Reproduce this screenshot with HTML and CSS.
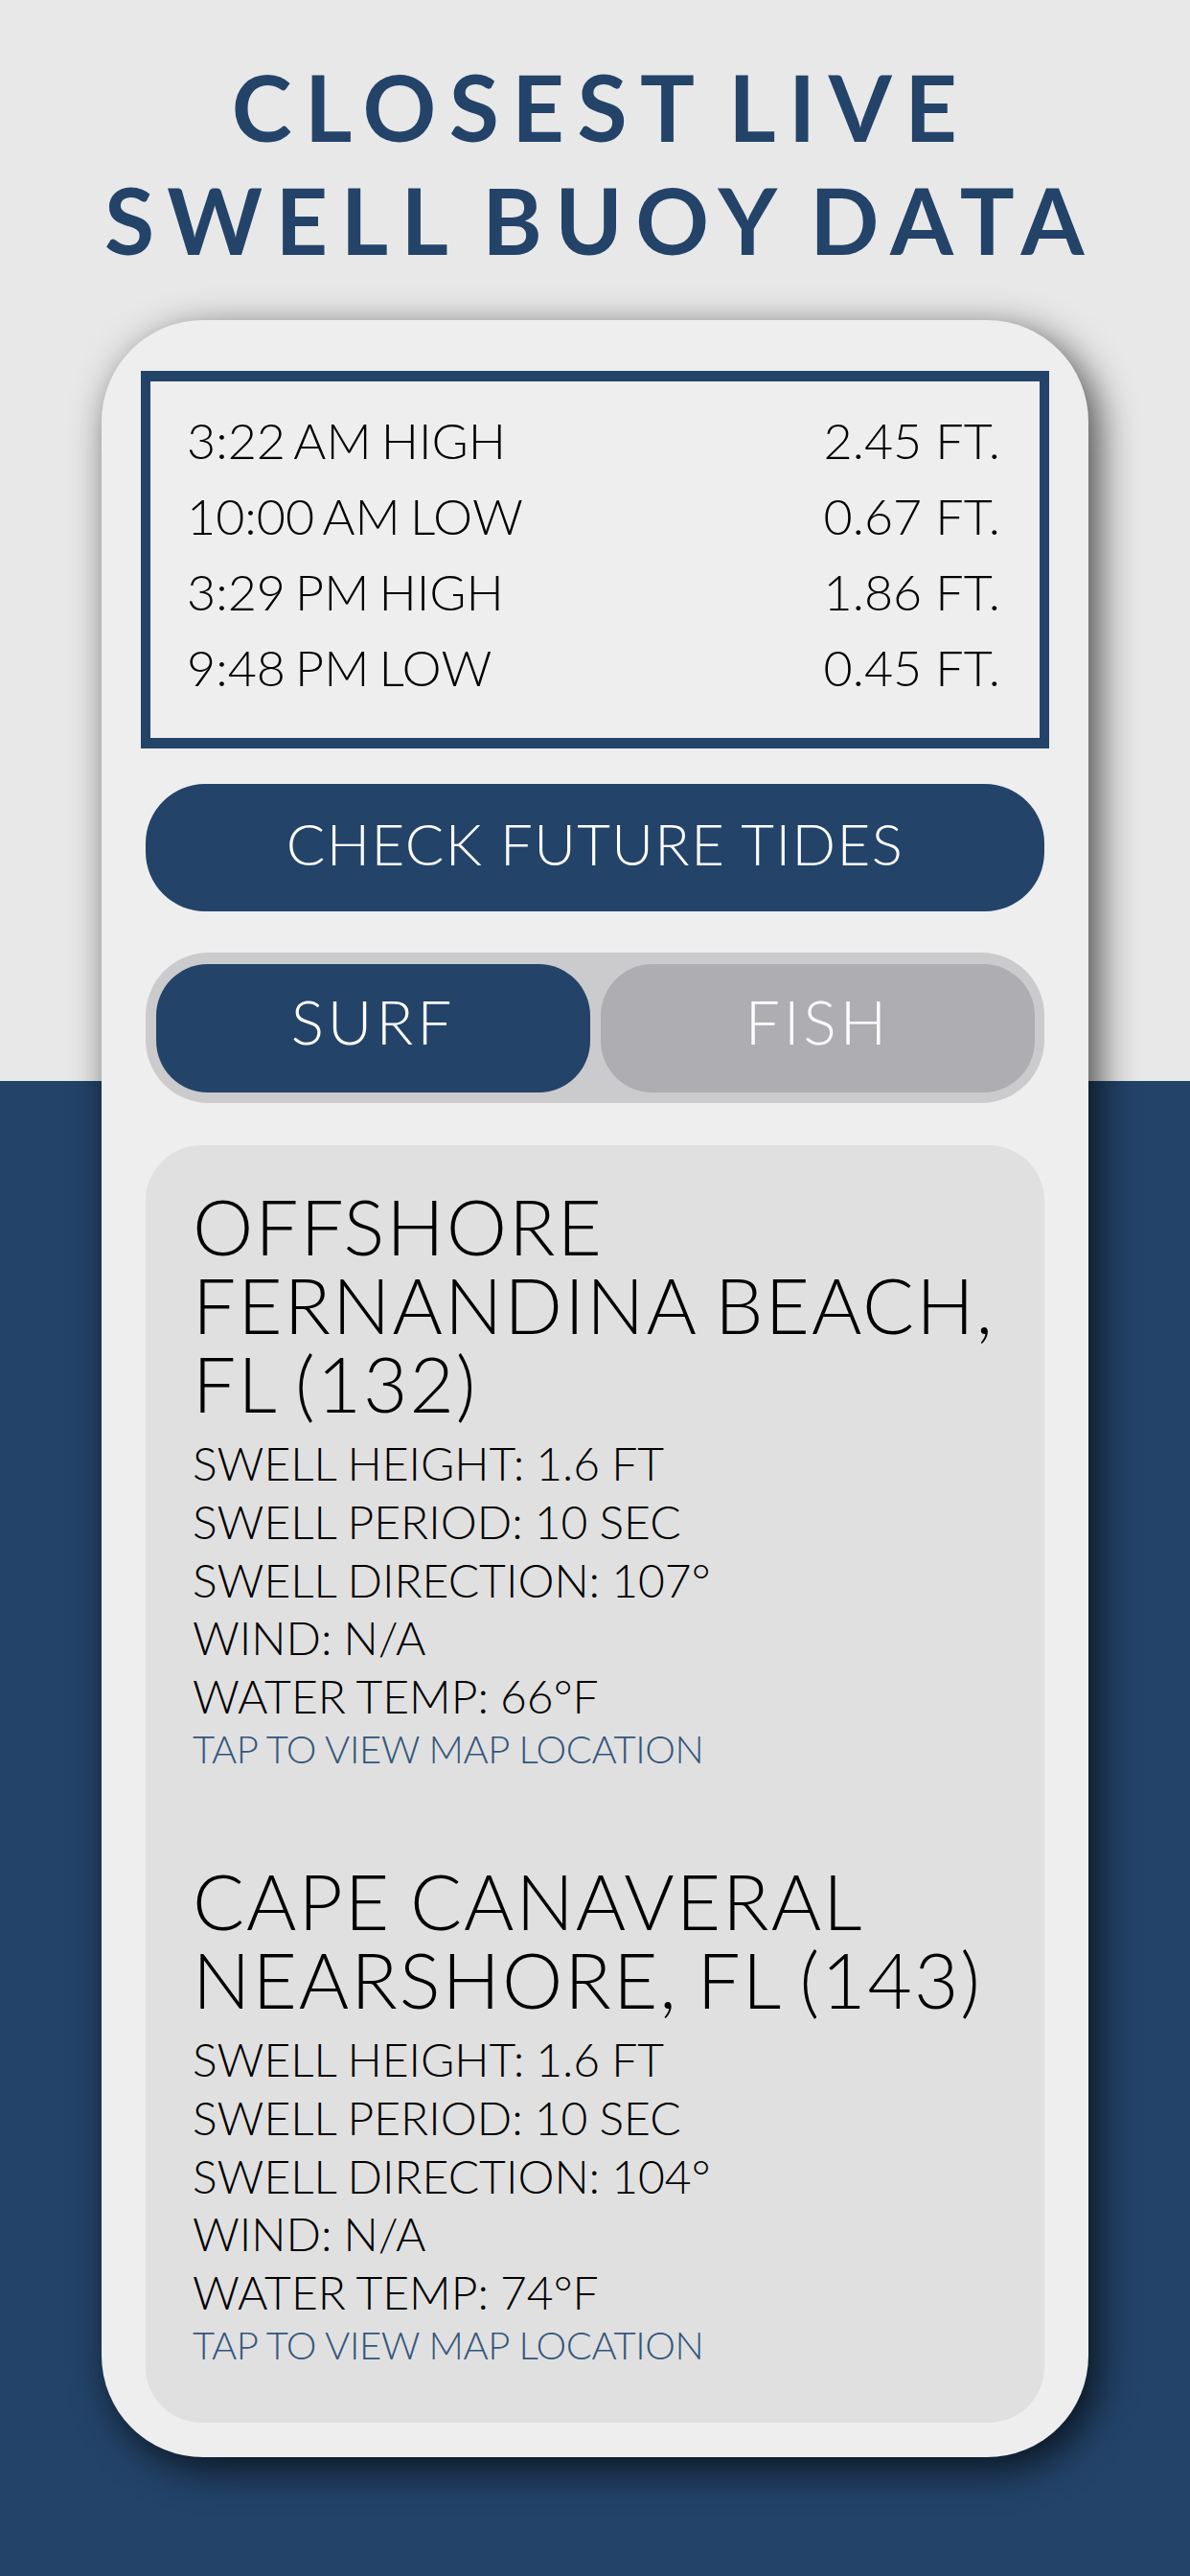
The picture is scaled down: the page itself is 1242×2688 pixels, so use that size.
FILE: index.html
```html
<!DOCTYPE html>
<html lang="en">
<head>
    <meta charset="UTF-8">
    <meta name="viewport" content="width=device-width, initial-scale=1.0">
    <title>Closest Live Swell Buoy Data</title>
    <link rel="stylesheet" href="styles.css">
</head>
<body>
    <h1 class="headline">CLOSEST LIVE<br>SWELL BUOY DATA</h1>
    <main class="card">
        <section class="tides">
            <div class="tide"><span>3:22 AM HIGH</span><span>2.45 FT.</span></div>
            <div class="tide"><span>10:00 AM LOW</span><span>0.67 FT.</span></div>
            <div class="tide"><span>3:29 PM HIGH</span><span>1.86 FT.</span></div>
            <div class="tide"><span>9:48 PM LOW</span><span>0.45 FT.</span></div>
        </section>
        <div class="btn-future">CHECK FUTURE TIDES</div>
        <div class="toggle">
            <div class="toggle-item active">SURF</div>
            <div class="toggle-item">FISH</div>
        </div>
        <section class="buoys">
            <article class="buoy">
                <h2>OFFSHORE<br>FERNANDINA BEACH,<br>FL (132)</h2>
                <p>SWELL HEIGHT: 1.6 FT</p>
                <p>SWELL PERIOD: 10 SEC</p>
                <p>SWELL DIRECTION: 107°</p>
                <p>WIND: N/A</p>
                <p>WATER TEMP: 66°F</p>
                <a class="map-link">TAP TO VIEW MAP LOCATION</a>
            </article>
            <article class="buoy">
                <h2>CAPE CANAVERAL<br>NEARSHORE, FL (143)</h2>
                <p>SWELL HEIGHT: 1.6 FT</p>
                <p>SWELL PERIOD: 10 SEC</p>
                <p>SWELL DIRECTION: 104°</p>
                <p>WIND: N/A</p>
                <p>WATER TEMP: 74°F</p>
                <a class="map-link">TAP TO VIEW MAP LOCATION</a>
            </article>
        </section>
    </main>
</body>
</html>
```

FILE: styles.css
```css
html, body { margin: 0; padding: 0; }
body { width: 1242px; height: 2688px; overflow: hidden; font-family: "Lato", "Liberation Sans", sans-serif; font-weight: 300; color: #000; background: linear-gradient(to bottom, #e8e8e8 1128px, #234369 1128px); }

.headline { margin: 0; padding: 52px 0 0 12px; height: 334px; box-sizing: border-box; text-align: center; font-size: 95px; line-height: 118px; font-weight: 700; letter-spacing: 13.5px; word-spacing: -12px; color: #234369; }

.card { width: 1030px; height: 2230px; margin: 0 auto; padding: 53px 46px 0; box-sizing: border-box; background: #eeeeee; border-radius: 106px; box-shadow: 10px 12px 40px rgba(0, 0, 0, .7); }

.tides { margin: 0 -5px; height: 394px; padding: 22px 41px 0 38px; box-sizing: border-box; border: 11px solid #234369; border-width: 11px 10px; }
.tide { display: flex; justify-content: space-between; height: 79px; line-height: 79px; font-size: 52px; word-spacing: -4px; }
.tide span:last-child { word-spacing: 0; }

.btn-future { margin-top: 37px; height: 133px; line-height: 124px; border-radius: 62px; background: #234369; color: #fff; text-align: center; font-size: 60px; letter-spacing: 1.4px; }

.toggle { margin-top: 43px; height: 157px; padding: 12px 10px 11px 11px; box-sizing: border-box; display: flex; gap: 11px; background: #cbcbcd; border-radius: 66px; }
.toggle-item { flex: 1; background: #aeadb2; color: #fff; border-radius: 54px; text-align: center; line-height: 120px; font-size: 64px; letter-spacing: 4px; }
.toggle-item.active { background: #234369; }

.buoys { margin-top: 44px; height: 1333px; padding: 43px 30px 0 49px; box-sizing: border-box; background: #e0e0e0; border-radius: 58px; }
.buoy { margin-bottom: 92px; }
.buoy h2 { margin: 0 0 13px; font-size: 80px; line-height: 82px; font-weight: 300; letter-spacing: 2px; word-spacing: -4px; }
.buoy p { margin: 0; font-size: 48px; line-height: 60.8px; word-spacing: -1px; }
.map-link { display: block; margin-top: -1px; font-size: 40px; line-height: 50px; letter-spacing: -.4px; color: #34567d; }
```
